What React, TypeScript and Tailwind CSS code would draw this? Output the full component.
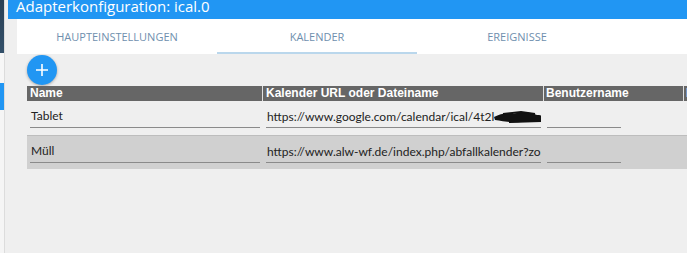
import React from "react";

const rows = [
  { name: "Tablet", url: "https://www.google.com/calendar/ical/4t2l", hidden: true, bg: "bg-[#efefef]" },
  { name: "Müll", url: "https://www.alw-wf.de/index.php/abfallkalender?zone=1", hidden: false, bg: "bg-[#d0d0d0]" },
];

function Scribble() {
  return (
    <svg width="56" height="13" viewBox="0 0 56 13" className="shrink-0 -ml-[1px]">
      <path
        d="M1 6 C8 2 14 2 20 3 C28 0 38 1 44 4 C49 4 53 6 55 10 C46 12 36 9 28 11 C18 12 9 10 2 9 Z"
        fill="#111"
      />
      <path d="M10 3 L28 1 L42 3 M16 11 L48 10 M4 7 L52 7" stroke="#111" strokeWidth="2" fill="none" />
    </svg>
  );
}

function App() {
  return (
    <div className="w-[687px] h-[253px] overflow-hidden flex bg-[#efefef] font-['Liberation_Sans',sans-serif]">
      {/* Streifen vom Hintergrundfenster */}
      <div className="w-[5px] shrink-0 flex flex-col border-r border-[#dcdcdc]">
        <div className="h-[53px] bg-gradient-to-b from-[#2a4055] to-[#33506a]" />
        <div className="h-[30px] bg-[#f7f7f7]" />
        <div className="h-[27px] bg-[#2196f3]" />
        <div className="flex-1 bg-[#f5f5f5]" />
      </div>

      <div className="flex-1 min-w-0 flex flex-col pl-[3px] bg-[#efefef]">
        <div className="h-[19px] bg-[#2196f3] pl-[8px] overflow-hidden">
          <div className="text-white text-[15px] leading-[19px] -mt-[3px] font-['Open_Sans',sans-serif] whitespace-nowrap">
            Adapterkonfiguration: ical.0
          </div>
        </div>

        <div className="ml-[9px] h-[35px] bg-white flex">
          {["HAUPTEINSTELLUNGEN", "KALENDER", "EREIGNISSE"].map((t, i) => (
            <div
              key={t}
              className={`w-[200px] shrink-0 flex items-center justify-center pt-[3px] text-[11px] text-[#6f8fae] font-['Open_Sans',sans-serif] border-b-2 ${
                i === 1 ? "border-[#bad7ec]" : "border-white"
              }`}
            >
              {t}
            </div>
          ))}
        </div>

        <div className="pl-[19px] flex flex-col">
          <button className="mt-[1px] w-[30px] h-[30px] rounded-full bg-[#2196f3] shadow-[0_1px_3px_rgba(0,0,0,0.3)] flex items-center justify-center text-white">
            <svg width="14" height="14" viewBox="0 0 14 14">
              <path d="M7 1 V13 M1 7 H13" stroke="white" strokeWidth="1.6" />
            </svg>
          </button>

          <div className="mt-[1px] w-[760px]">
            <div className="h-[15px] bg-[#666666] flex text-white text-[12px] font-bold leading-[15px] whitespace-nowrap">
              <div className="w-[236px] shrink-0 pl-[3px] border-r border-[#e0e0e0]">Name</div>
              <div className="w-[281px] shrink-0 pl-[3px] border-r border-[#e0e0e0]">Kalender URL oder Dateiname</div>
              <div className="w-[140px] shrink-0 pl-[2px] border-r border-[#e0e0e0]">Benutzername</div>
              <div className="flex-1 pl-[2px]">Passwort</div>
            </div>

            {rows.map((r, i) => (
              <div
                key={r.name}
                className={`h-[34px] flex ${r.bg} ${i > 0 ? "border-t border-[#bdbdbd]" : ""} text-[12px] text-[#222] font-['Lato',sans-serif]`}
              >
                <div className="w-[236px] shrink-0 px-[3px] pt-[6px]">
                  <div className="h-[21px] border-b border-[#8a8a8a] whitespace-nowrap overflow-hidden leading-[18px] pl-[1px]">
                    {r.name}
                  </div>
                </div>
                <div className="w-[281px] shrink-0 px-[3px] pt-[6px]">
                  <div className="h-[21px] border-b border-[#8a8a8a] whitespace-nowrap overflow-hidden leading-[18px] pl-[1px] flex items-center">
                    <span>{r.url}</span>
                    {r.hidden && <Scribble />}
                  </div>
                </div>
                <div className="w-[140px] shrink-0 px-[3px] pt-[6px]">
                  <div className="w-[74px] h-[21px] border-b border-[#8a8a8a]" />
                </div>
                <div className="flex-1 px-[3px] pt-[6px]">
                  <div className="w-[60px] h-[21px] border-b border-[#8a8a8a]" />
                </div>
              </div>
            ))}
          </div>
        </div>
      </div>
    </div>
  );
}

export default App;
